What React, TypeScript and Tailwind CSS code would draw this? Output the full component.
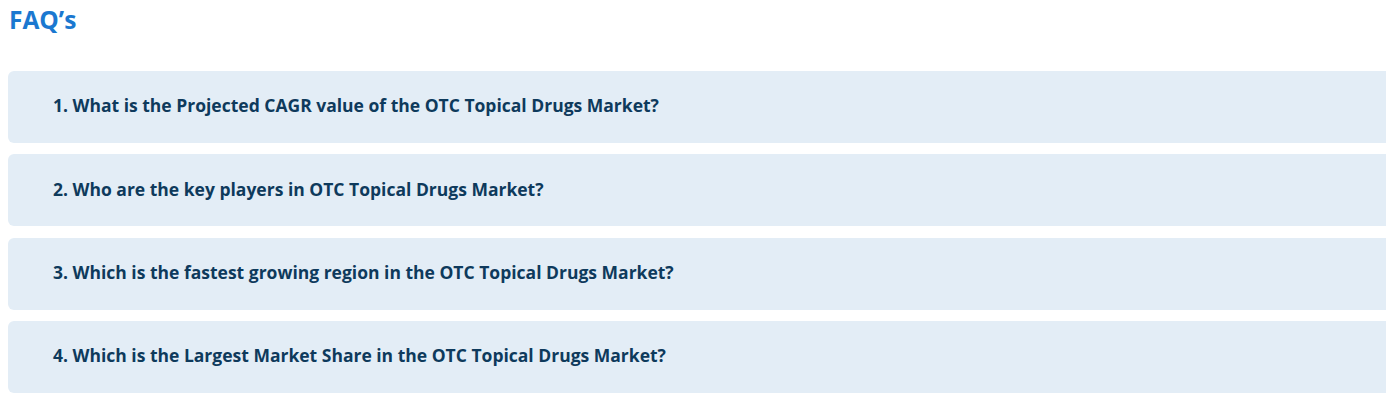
const faqs = [
  "1. What is the Projected CAGR value of the OTC Topical Drugs Market?",
  "2. Who are the key players in OTC Topical Drugs Market?",
  "3. Which is the fastest growing region in the OTC Topical Drugs Market?",
  "4. Which is the Largest Market Share in the OTC Topical Drugs Market?",
];

export default function App() {
  return (
    <div className="w-[1386px] h-[401px] overflow-hidden bg-white pl-2 font-['Open_Sans',sans-serif]">
      <h2 className="pt-[6px] pl-px text-[24.5px] leading-[28px] font-bold text-[#1b78d0]">FAQ’s</h2>
      <div className="mt-[37px] flex flex-col gap-[11.3px] mr-[-12px]">
        {faqs.map((q) => (
          <div key={q} className="h-[72px] rounded-md bg-[#e3edf6] flex items-center pl-[45px] pb-[3px]">
            <span className="text-[17.5px] font-bold text-[#0e3a5c]">{q}</span>
          </div>
        ))}
      </div>
    </div>
  );
}
